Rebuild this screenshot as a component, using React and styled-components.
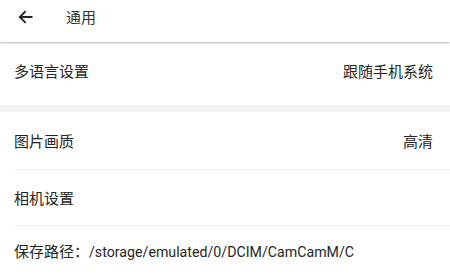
import React from "react";
import styled, { createGlobalStyle } from "styled-components";

const GlobalStyle = createGlobalStyle`
  html, body {
    margin: 0;
    padding: 0;
    background: #fff;
    overflow: hidden;
  }
  body {
    font-family: Roboto, "Noto Sans CJK SC", sans-serif;
    color: #2b2b2b;
  }
`;

const Page = styled.div`
  width: 450px;
  height: 279px;
  overflow: hidden;
  background: #fff;
`;

const Header = styled.header`
  height: 42px;
  display: flex;
  align-items: flex-start;
  background: #fff;
  box-shadow: 0 1px 2px rgba(0, 0, 0, 0.28);
  position: relative;
  z-index: 1;
`;

const HeaderInner = styled.div`
  height: 33px;
  display: flex;
  align-items: center;
`;

const BackButton = styled.button`
  border: 0;
  background: none;
  padding: 0;
  margin-left: 18px;
  width: 15px;
  height: 14px;
  display: flex;
  color: #222;
`;

const Title = styled.h1`
  margin: 0 0 0 33px;
  font-size: 15px;
  font-weight: 400;
  color: #333;
`;

const Section = styled.section`
  background: #fff;
`;

const Gap = styled.div`
  height: 7px;
  background: #f4f4f4;
`;

const Row = styled.div`
  height: ${(p) => p.$h}px;
  display: flex;
  align-items: center;
  justify-content: space-between;
  padding: 0 17px 0 14px;
  padding-bottom: ${(p) => p.$shift || 0}px;
  box-sizing: border-box;
  font-size: 15px;
  white-space: nowrap;
`;

const Divider = styled.div`
  height: 1px;
  margin-left: 14px;
  background: #eeeeee;
`;

const Label = styled.span`
  color: #262626;
`;

const Value = styled.span`
  color: #262626;
`;

const Path = styled.span`
  font-size: 14.2px;
  color: #262626;
`;

const BackArrow = () => (
  <svg width="15" height="14" viewBox="0 0 15 14" fill="none">
    <path
      d="M14.5 7H1.8M7.6 1.2L1.8 7l5.8 5.8"
      stroke="currentColor"
      strokeWidth="1.9"
    />
  </svg>
);

export default function App() {
  return (
    <Page>
      <GlobalStyle />
      <Header>
        <HeaderInner>
          <BackButton aria-label="返回">
            <BackArrow />
          </BackButton>
          <Title>通用</Title>
        </HeaderInner>
      </Header>
      <Section>
        <Row $h={63} $shift={6}>
          <Label>多语言设置</Label>
          <Value>跟随手机系统</Value>
        </Row>
      </Section>
      <Gap />
      <Section>
        <Row $h={57}>
          <Label>图片画质</Label>
          <Value>高清</Value>
        </Row>
        <Divider />
        <Row $h={55}>
          <Label>相机设置</Label>
        </Row>
        <Divider />
        <Row $h={48}>
          <Label>
            保存路径：<Path>/storage/emulated/0/DCIM/CamCamM/C</Path>
          </Label>
        </Row>
      </Section>
    </Page>
  );
}
